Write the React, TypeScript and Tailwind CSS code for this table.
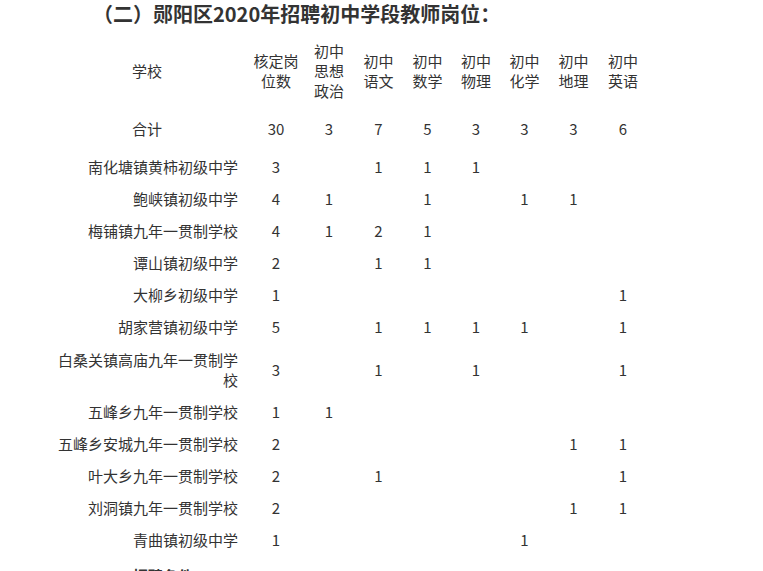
const cols = 'grid grid-cols-[200px_56px_50px_49px_49px_48px_49px_49px_50px] items-center'

const subjects = ['初中思想政治', '初中语文', '初中数学', '初中物理', '初中化学', '初中地理', '初中英语']

type Row = { school: string; values: (number | null)[]; tall?: boolean }

const rows: Row[] = [
  { school: '南化塘镇黄柿初级中学', values: [3, null, 1, 1, 1, null, null, null] },
  { school: '鲍峡镇初级中学', values: [4, 1, null, 1, null, 1, 1, null] },
  { school: '梅铺镇九年一贯制学校', values: [4, 1, 2, 1, null, null, null, null] },
  { school: '谭山镇初级中学', values: [2, null, 1, 1, null, null, null, null] },
  { school: '大柳乡初级中学', values: [1, null, null, null, null, null, null, 1] },
  { school: '胡家营镇初级中学', values: [5, null, 1, 1, 1, 1, null, 1] },
  { school: '白桑关镇高庙九年一贯制学校', values: [3, null, 1, null, 1, null, null, 1], tall: true },
  { school: '五峰乡九年一贯制学校', values: [1, 1, null, null, null, null, null, null] },
  { school: '五峰乡安城九年一贯制学校', values: [2, null, null, null, null, null, 1, 1] },
  { school: '叶大乡九年一贯制学校', values: [2, null, 1, null, null, null, null, 1] },
  { school: '刘洞镇九年一贯制学校', values: [2, null, null, null, null, null, 1, 1] },
  { school: '青曲镇初级中学', values: [1, null, null, null, null, 1, null, null] },
]

export default function App() {
  return (
    <div
      className="w-[763px] h-[571px] overflow-hidden bg-white text-[#333]"
      style={{ fontFamily: '"Noto Sans CJK SC", "Microsoft YaHei", sans-serif' }}
    >
      <h2 className="pl-[93px] pt-[1px] text-[20px] leading-[26px] font-bold text-[#333]">
        （二）郧阳区2020年招聘初中学段教师岗位：
      </h2>

      <div className="ml-[48px] mt-[9px] text-[15px] leading-[20px]">
        <div className={`${cols} h-[70px] text-center`}>
          <div className="pl-[8px] pr-[10px]">学校</div>
          <div className="px-1">核定岗位数</div>
          {subjects.map((s) => (
            <div key={s} className="px-1">
              {s}
            </div>
          ))}
        </div>

        <div className={`${cols} h-[45px] text-center`}>
          <div className="pl-[8px] pr-[10px]">合计</div>
          {[30, 3, 7, 5, 3, 3, 3, 6].map((v, i) => (
            <div key={i}>{v}</div>
          ))}
        </div>

        {rows.map((r) => (
          <div key={r.school} className={`${cols} ${r.tall ? 'h-[53px]' : 'h-[32px]'} text-center`}>
            <div className="pl-[8px] pr-[10px] text-right">{r.school}</div>
            {r.values.map((v, i) => (
              <div key={i}>{v ?? ''}</div>
            ))}
          </div>
        ))}
      </div>

      <div className="pl-[133px] pt-[10px] text-[15px] leading-[20px] font-bold">招聘条件：</div>
    </div>
  )
}
